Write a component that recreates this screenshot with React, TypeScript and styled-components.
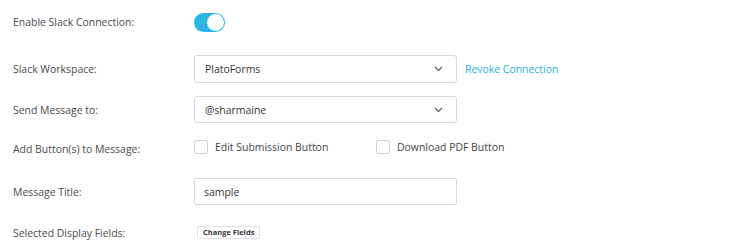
import styled, { createGlobalStyle } from 'styled-components';

const GlobalStyle = createGlobalStyle`
  body {
    margin: 0;
    background: #fff;
    font-family: 'Open Sans', 'Noto Sans', sans-serif;
  }
`;

const Form = styled.div`
  width: 733px;
  height: 244px;
  padding: 12px 0 0 13px;
  box-sizing: border-box;
  display: flex;
  flex-direction: column;
`;

const Row = styled.div<{ $top: number; $height: number; $align?: string }>`
  display: flex;
  align-items: ${p => p.$align || 'center'};
  margin-top: ${p => p.$top}px;
  height: ${p => p.$height}px;
`;

const Label = styled.div<{ $offset?: number }>`
  width: 181px;
  flex-shrink: 0;
  font-size: 10.45px;
  color: #4a4a4a;
  padding-top: ${p => p.$offset || 0}px;
`;

const Toggle = styled.div`
  width: 31px;
  height: 19px;
  border-radius: 10px;
  background: #29b6e6;
  position: relative;
  &::after {
    content: '';
    position: absolute;
    right: 1px;
    top: 1px;
    width: 17px;
    height: 17px;
    border-radius: 50%;
    background: #fff;
  }
`;

const Select = styled.div<{ $height: number }>`
  width: 263px;
  height: ${p => p.$height}px;
  box-sizing: border-box;
  border: 1px solid #d4d8dd;
  border-radius: 3px;
  display: flex;
  align-items: center;
  justify-content: space-between;
  padding: 0 13px 0 10px;
  font-size: 10.45px;
  color: #333;
`;

const Link = styled.a`
  margin-left: 8px;
  font-size: 10.45px;
  color: #29b0e0;
  cursor: pointer;
`;

const CheckGroup = styled.label`
  display: flex;
  align-items: center;
  gap: 7px;
  font-size: 10.45px;
  color: #444;
  width: 182px;
`;

const Box = styled.span`
  width: 14px;
  height: 14px;
  box-sizing: border-box;
  border: 1px solid #d0d4d8;
  border-radius: 2px;
  background: #fff;
`;

const Input = styled.div`
  width: 263px;
  height: 27px;
  box-sizing: border-box;
  border: 1px solid #d4d8e3;
  border-radius: 2px;
  display: flex;
  align-items: center;
  padding-left: 9px;
  font-size: 10.45px;
  color: #333;
`;

const SmallButton = styled.button`
  margin-left: 3px;
  height: 13px;
  padding: 0 5px;
  border: 1px solid #dcdfe3;
  border-radius: 1px;
  background: #fff;
  font-family: 'Open Sans', 'Noto Sans', sans-serif;
  font-size: 7.5px;
  font-weight: 700;
  color: #333;
  line-height: 1;
`;

const Chevron = () => (
  <svg width="9" height="6" viewBox="0 0 9 6">
    <path d="M1 1 L4.5 4.5 L8 1" fill="none" stroke="#555" strokeWidth="1.2" />
  </svg>
);

export default function App() {
  return (
    <>
      <GlobalStyle />
      <Form>
        <Row $top={0} $height={20}>
          <Label>Enable Slack Connection:</Label>
          <Toggle />
        </Row>
        <Row $top={23} $height={28}>
          <Label>Slack Workspace:</Label>
          <Select $height={28}>
            PlatoForms
            <Chevron />
          </Select>
          <Link>Revoke Connection</Link>
        </Row>
        <Row $top={13} $height={27}>
          <Label>Send Message to:</Label>
          <Select $height={27}>
            @sharmaine
            <Chevron />
          </Select>
        </Row>
        <Row $top={17} $height={20} $align="flex-start">
          <Label $offset={2}>Add Button(s) to Message:</Label>
          <CheckGroup>
            <Box />
            Edit Submission Button
          </CheckGroup>
          <CheckGroup>
            <Box />
            Download PDF Button
          </CheckGroup>
        </Row>
        <Row $top={18} $height={27}>
          <Label>Message Title:</Label>
          <Input>sample</Input>
        </Row>
        <Row $top={20} $height={15}>
          <Label>Selected Display Fields:</Label>
          <SmallButton>Change Fields</SmallButton>
        </Row>
      </Form>
    </>
  );
}
